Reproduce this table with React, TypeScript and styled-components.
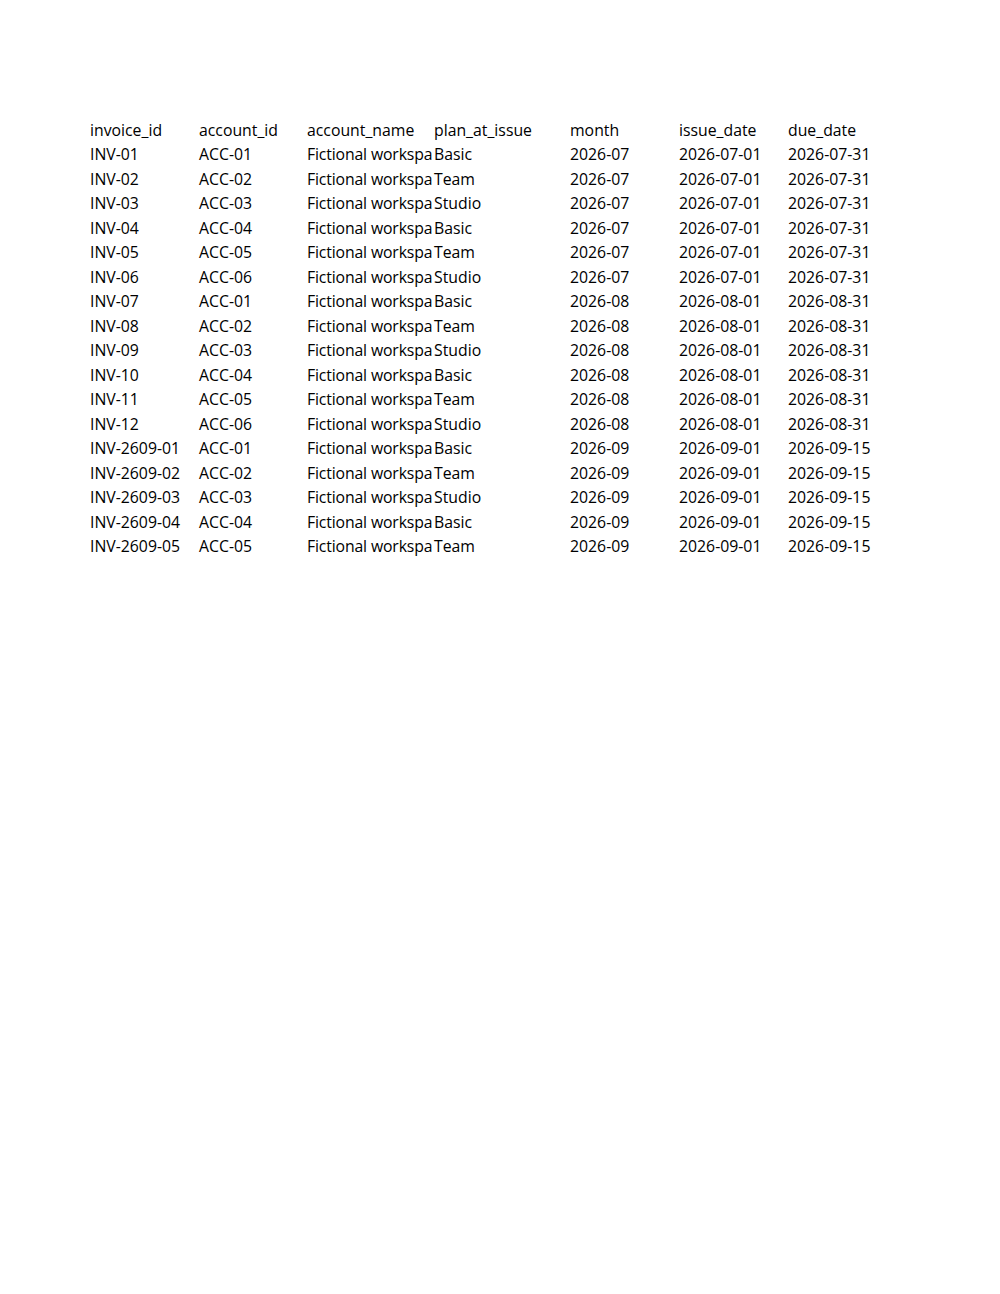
import React from "react";
import styled, { createGlobalStyle } from "styled-components";

const GlobalStyle = createGlobalStyle`
  body {
    margin: 0;
    background: #ffffff;
  }
`;

const columns = [
  "invoice_id",
  "account_id",
  "account_name",
  "plan_at_issue",
  "month",
  "issue_date",
  "due_date",
];

const widths = [109, 108, 127, 136, 109, 109, 109];

const plans = ["Basic", "Team", "Studio"];

const rows: string[][] = [];
for (let i = 0; i < 12; i++) {
  const n = String(i + 1).padStart(2, "0");
  const acc = String((i % 6) + 1).padStart(2, "0");
  const m = i < 6 ? "07" : "08";
  rows.push([
    `INV-${n}`,
    `ACC-${acc}`,
    "Fictional workspa",
    plans[i % 3],
    `2026-${m}`,
    `2026-${m}-01`,
    `2026-${m}-31`,
  ]);
}
for (let i = 0; i < 5; i++) {
  const n = String(i + 1).padStart(2, "0");
  rows.push([
    `INV-2609-${n}`,
    `ACC-${n}`,
    "Fictional workspa",
    plans[i % 3],
    "2026-09",
    "2026-09-01",
    "2026-09-15",
  ]);
}

const App = () => {
  return (
    <Page>
      <GlobalStyle />
      <Sheet>
        {columns.map((c) => (
          <Cell key={c}>{c}</Cell>
        ))}
        {rows.map((r, ri) =>
          r.map((v, ci) => (
            <Cell key={`${ri}-${ci}`} $tight={ci === 2}>
              {v}
            </Cell>
          ))
        )}
      </Sheet>
    </Page>
  );
};

export default App;

const Page = styled.div`
  width: 1000px;
  height: 1294px;
  padding: 118px 0 0 88px;
  box-sizing: border-box;
  background: #ffffff;
`;

const Sheet = styled.div`
  display: grid;
  grid-template-columns: ${widths.map((w) => `${w}px`).join(" ")};
  grid-auto-rows: 24.47px;
`;

const Cell = styled.div<{ $tight?: boolean }>`
  padding-left: 2px;
  font-family: "Open Sans", "Liberation Sans", sans-serif;
  font-size: 15.8px;
  line-height: 24.47px;
  letter-spacing: ${(p) => (p.$tight ? "-0.15px" : "0")};
  color: #000000;
  white-space: nowrap;
`;
